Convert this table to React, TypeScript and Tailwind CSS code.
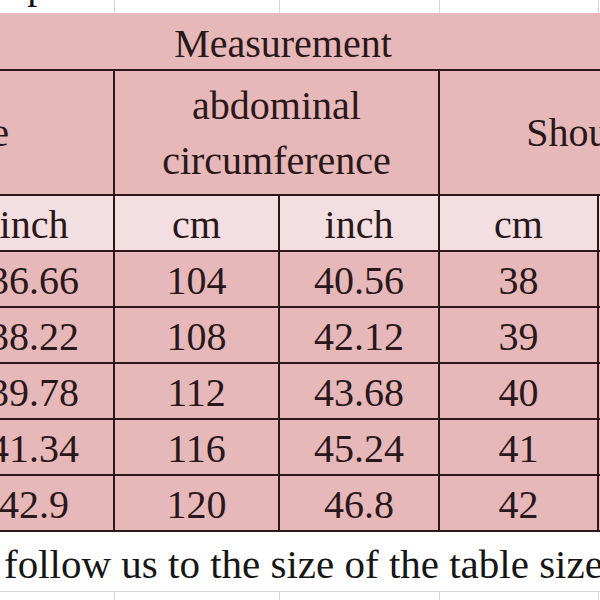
const cols = [160, 160, 165, 160, 159, 160];

const rows = [
  ["94", "36.66", "104", "40.56", "38", "14.82"],
  ["98", "38.22", "108", "42.12", "39", "15.21"],
  ["102", "39.78", "112", "43.68", "40", "15.6"],
  ["106", "41.34", "116", "45.24", "41", "15.99"],
  ["110", "42.9", "120", "46.8", "42", "16.38"],
];

const units = ["cm", "inch", "cm", "inch", "cm", "inch"];

const dark = "border-2 border-[#2e1619]";

export default function App() {
  return (
    <div className="w-[600px] h-[600px] overflow-hidden bg-white font-['Liberation_Serif','Times_New_Roman',serif] text-[40px] text-[#2a1719]">
      <table className="table-fixed border-collapse ml-[-207px] mt-[-43px] w-[964px]">
        <colgroup>
          {cols.map((w, i) => (
            <col key={i} style={{ width: w }} />
          ))}
        </colgroup>
        <tbody>
          {/* sheet row above the table, only its bottom edge shows */}
          <tr>
            <td colSpan={2} className="h-[56px] p-0 pl-[50px] border-r border-[#d6d6d6] text-left leading-[56px] text-[#111]">
              Size Description
            </td>
            <td className="border-r border-[#d6d6d6]" />
            <td className="border-r border-[#d6d6d6]" />
            <td className="border-r border-[#d6d6d6]" />
            <td />
          </tr>

          <tr className="bg-[#e7b8ba]">
            <td colSpan={6} className="h-[57px] p-0 pt-[5px] pl-[14px] text-center leading-[44px] border-b-2 border-[#2e1619]">
              Measurement
            </td>
          </tr>

          <tr className="bg-[#e7b8ba]">
            <td colSpan={2} className={`${dark} h-[125px] p-0 pr-[10px] text-center leading-[55px]`}>
              Hipline
            </td>
            <td colSpan={2} className={`${dark} p-0 text-center leading-[55px]`}>
              abdominal
              <br />
              circumference
            </td>
            <td colSpan={2} className={`${dark} p-0 text-center leading-[55px]`}>
              Shoulder
            </td>
          </tr>

          <tr className="bg-[#f3dfe1]">
            {units.map((u, i) => (
              <td key={i} className={`${dark} h-[56px] p-0 pt-[4px] text-center leading-[44px]`}>
                {u}
              </td>
            ))}
          </tr>

          {rows.map((r, i) => (
            <tr key={i} className="bg-[#e7b8ba]">
              {r.map((v, j) => (
                <td key={j} className={`${dark} h-[56px] p-0 pt-[4px] text-center leading-[44px]`}>
                  {v}
                </td>
              ))}
            </tr>
          ))}

          <tr>
            <td colSpan={6} className="h-[60px] p-0 pt-[6px] pl-[210px] text-left text-[41px] leading-[44px] text-[#161616] border-b border-[#d6d6d6] whitespace-nowrap">
              follow us to the size of the table size
            </td>
          </tr>

          <tr>
            <td colSpan={2} className="h-[60px] border-r border-[#d6d6d6]" />
            <td className="border-r border-[#d6d6d6]" />
            <td className="border-r border-[#d6d6d6]" />
            <td className="border-r border-[#d6d6d6]" />
            <td />
          </tr>
        </tbody>
      </table>
    </div>
  );
}
